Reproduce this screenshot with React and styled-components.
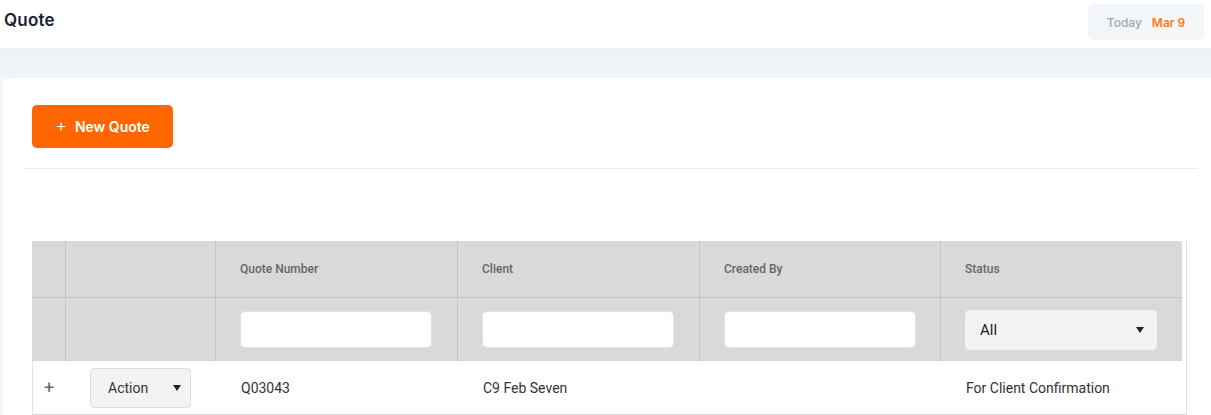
import styled, { createGlobalStyle } from 'styled-components';

const GlobalStyle = createGlobalStyle`
  html, body {
    margin: 0;
    padding: 0;
    background: #f3f6f9;
    font-family: 'Inter', 'Noto Sans', sans-serif;
  }
  * { box-sizing: border-box; }
`;

const columns = [
  { key: 'expand', width: 34, label: '' },
  { key: 'action', width: 150, label: '' },
  { key: 'number', width: 242, label: 'Quote Number' },
  { key: 'client', width: 242, label: 'Client' },
  { key: 'created', width: 241, label: 'Created By' },
  { key: 'status', width: 241, label: 'Status' },
];

const rows = [
  { number: 'Q03043', client: 'C9 Feb Seven', created: '', status: 'For Client Confirmation' },
];

const App = () => {
  return (
    <Page>
      <GlobalStyle />
      <Header>
        <Title>Quote</Title>
        <DateBadge>
          <DateLabel>Today</DateLabel>
          <DateValue>Mar 9</DateValue>
        </DateBadge>
      </Header>
      <Band />
      <Card>
        <Toolbar>
          <PrimaryButton>
            <span className='plus'>+</span>
            New Quote
          </PrimaryButton>
        </Toolbar>
        <Divider />
        <Grid>
          <HeadRow>
            {columns.map((c) => (
              <HeadCell key={c.key} $w={c.width}>
                {c.label}
              </HeadCell>
            ))}
          </HeadRow>
          <FilterRow>
            {columns.map((c) => (
              <FilterCell key={c.key} $w={c.width}>
                {c.key === 'status' ? (
                  <StatusSelect>
                    <span>All</span>
                    <Caret />
                  </StatusSelect>
                ) : ['number', 'client', 'created'].includes(c.key) ? (
                  <FilterInput />
                ) : null}
              </FilterCell>
            ))}
          </FilterRow>
          {rows.map((r) => (
            <DataRow key={r.number}>
              <DataCell $w={33} $center>
                <Expand>+</Expand>
              </DataCell>
              <DataCell $w={150}>
                <ActionSelect>
                  <span>Action</span>
                  <Caret />
                </ActionSelect>
              </DataCell>
              <DataCell $w={242} $pad>{r.number}</DataCell>
              <DataCell $w={242} $pad>{r.client}</DataCell>
              <DataCell $w={241} $pad>{r.created}</DataCell>
              <DataCell $w={242} $pad>{r.status}</DataCell>
            </DataRow>
          ))}
        </Grid>
      </Card>
    </Page>
  );
};
export default App;

const Page = styled.div`
  width: 1211px;
  height: 415px;
  overflow: hidden;
  background: #f3f6f9;
`;

const Header = styled.div`
  height: 48px;
  background: #fff;
  display: flex;
  align-items: flex-start;
  justify-content: space-between;
  padding: 0 7px 0 4px;
`;

const Title = styled.h1`
  margin: 10px 0 0;
  font-size: 17px;
  font-weight: 600;
  color: #1b1f33;
  letter-spacing: 0.2px;
`;

const DateBadge = styled.div`
  margin-top: 4px;
  height: 36px;
  width: 116px;
  background: #f3f6f9;
  border-radius: 6px;
  display: flex;
  align-items: center;
  justify-content: center;
  gap: 10px;
  font-size: 12px;
  font-weight: 600;
`;

const DateLabel = styled.span`
  color: #a1a5b7;
  font-weight: 500;
`;

const DateValue = styled.span`
  color: #ff7a1a;
`;

const Band = styled.div`
  height: 30px;
  background: linear-gradient(#edf0f4, #f3f6f9);
`;

const Card = styled.div`
  margin-left: 3px;
  background: #fff;
  border-top-left-radius: 6px;
  height: 400px;
  padding: 27px 13px 0 20px;
`;

const Toolbar = styled.div`
  display: flex;
  padding-left: 9px;
`;

const PrimaryButton = styled.button`
  height: 43px;
  width: 141px;
  border: none;
  border-radius: 5px;
  background: #ff6600;
  color: #fff;
  font-family: 'Inter', 'Noto Sans', sans-serif;
  font-size: 14px;
  font-weight: 600;
  display: flex;
  align-items: center;
  justify-content: center;
  gap: 8px;
  padding: 0;
  .plus {
    font-weight: 300;
    font-size: 18px;
    line-height: 1;
    margin-top: -2px;
  }
`;

const Divider = styled.div`
  height: 1px;
  background: #eceef1;
  margin-top: 20px;
`;

const Grid = styled.div`
  margin: 72px 0 0 9px;
  width: 1155px;
  border-right: 1px solid #dcdcdc;
  font-family: 'Roboto', 'Liberation Sans', sans-serif;
`;

const HeadRow = styled.div`
  display: flex;
  width: 1150px;
  height: 57px;
  background: #d9d9d9;
  border-bottom: 1px solid #c4c4c4;
`;

const HeadCell = styled.div`
  width: ${(p) => p.$w}px;
  flex: none;
  border-right: 1px solid #c4c4c4;
  display: flex;
  align-items: center;
  padding-left: 24px;
  font-size: 12px;
  font-weight: 500;
  color: #666;
  &:nth-child(-n + 2) { padding-left: 0; }
  &:last-child { border-right: none; }
`;

const FilterRow = styled.div`
  display: flex;
  width: 1150px;
  height: 63px;
  background: #d9d9d9;
`;

const FilterCell = styled(HeadCell)`
  font-size: 15px;
  font-weight: 400;
`;

const FilterInput = styled.div`
  width: 192px;
  height: 37px;
  background: #fff;
  border: 1px solid #e4e4e4;
  border-radius: 5px;
`;

const StatusSelect = styled.div`
  width: 192px;
  height: 40px;
  background: #f3f3f3;
  border-radius: 5px;
  display: flex;
  align-items: center;
  justify-content: space-between;
  padding: 0 13px 0 15px;
  font-size: 15px;
  font-weight: 400;
  color: #222;
`;

const Caret = styled.span`
  width: 0;
  height: 0;
  border-left: 4px solid transparent;
  border-right: 4px solid transparent;
  border-top: 6px solid #222;
`;

const DataRow = styled.div`
  display: flex;
  height: 54px;
  background: #fff;
  border-left: 1px solid #e3e3e3;
  border-bottom: 1px solid #dcdcdc;
`;

const DataCell = styled.div`
  width: ${(p) => p.$w}px;
  flex: none;
  display: flex;
  align-items: center;
  justify-content: ${(p) => (p.$center ? 'center' : 'flex-start')};
  padding-left: ${(p) => (p.$pad ? '25px' : p.$center ? '0' : '24px')};
  font-size: 14px;
  color: #333;
`;

const Expand = styled.span`
  font-size: 18px;
  color: #666;
  margin-left: -1px;
`;

const ActionSelect = styled.div`
  width: 101px;
  height: 40px;
  background: #f3f3f3;
  border: 1px solid #ddd;
  border-radius: 4px;
  display: flex;
  align-items: center;
  justify-content: space-between;
  padding: 0 9px 0 17px;
  font-size: 14px;
  color: #333;
`;
